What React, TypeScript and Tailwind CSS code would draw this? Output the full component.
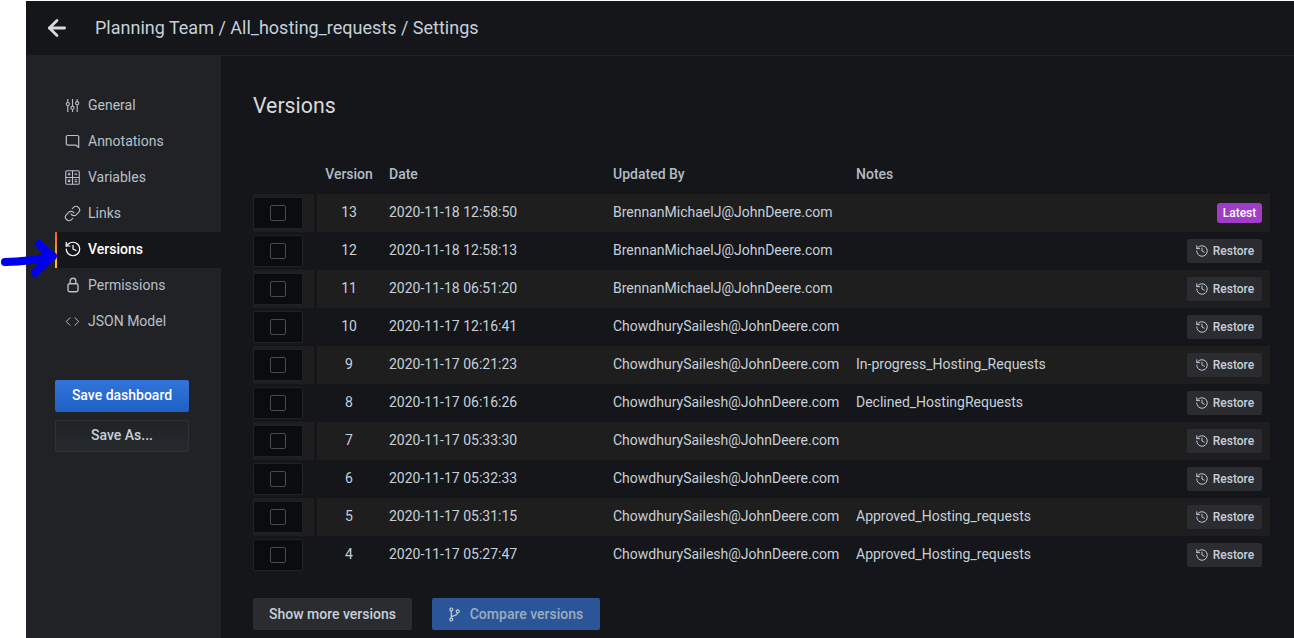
import { ArrowLeft, Link, History, Code } from 'lucide-react';

const NAV = [
  { label: 'General', icon: SlidersIcon, size: 'h-[15px] w-[15px]' },
  { label: 'Annotations', icon: CommentIcon, size: 'h-[15px] w-[15px]' },
  { label: 'Variables', icon: CalcIcon, size: 'h-[15px] w-[15px]' },
  { label: 'Links', icon: Link, size: 'h-[17px] w-[17px]' },
  { label: 'Versions', icon: History, size: 'h-[18px] w-[18px]', active: true },
  { label: 'Permissions', icon: LockIcon, size: 'h-[16px] w-[16px]' },
  { label: 'JSON Model', icon: Code, size: 'h-[15px] w-[15px]' },
];

const VERSIONS = [
  { v: 13, date: '2020-11-18 12:58:50', by: 'BrennanMichaelJ@JohnDeere.com', notes: '', latest: true },
  { v: 12, date: '2020-11-18 12:58:13', by: 'BrennanMichaelJ@JohnDeere.com', notes: '' },
  { v: 11, date: '2020-11-18 06:51:20', by: 'BrennanMichaelJ@JohnDeere.com', notes: '' },
  { v: 10, date: '2020-11-17 12:16:41', by: 'ChowdhurySailesh@JohnDeere.com', notes: '' },
  { v: 9, date: '2020-11-17 06:21:23', by: 'ChowdhurySailesh@JohnDeere.com', notes: 'In-progress_Hosting_Requests' },
  { v: 8, date: '2020-11-17 06:16:26', by: 'ChowdhurySailesh@JohnDeere.com', notes: 'Declined_HostingRequests' },
  { v: 7, date: '2020-11-17 05:33:30', by: 'ChowdhurySailesh@JohnDeere.com', notes: '' },
  { v: 6, date: '2020-11-17 05:32:33', by: 'ChowdhurySailesh@JohnDeere.com', notes: '' },
  { v: 5, date: '2020-11-17 05:31:15', by: 'ChowdhurySailesh@JohnDeere.com', notes: 'Approved_Hosting_requests' },
  { v: 4, date: '2020-11-17 05:27:47', by: 'ChowdhurySailesh@JohnDeere.com', notes: 'Approved_Hosting_requests' },
];

function SlidersIcon({ className }: { className?: string }) {
  return (
    <svg viewBox="0 0 16 16" fill="none" stroke="currentColor" strokeWidth="1.2" className={className}>
      <path d="M3 1v3.7M3 8.3v6.7M8 1v7.7M8 12.3v2.7M13 1v2.7M13 7.3v7.7" />
      <circle cx="3" cy="6.5" r="1.7" />
      <circle cx="8" cy="10.5" r="1.7" />
      <circle cx="13" cy="5.5" r="1.7" />
    </svg>
  );
}

function CommentIcon({ className }: { className?: string }) {
  return (
    <svg viewBox="0 0 16 16" fill="none" stroke="currentColor" strokeWidth="1.3" strokeLinejoin="round" className={className}>
      <path d="M2.8 1.6h10.4a1.4 1.4 0 0 1 1.4 1.4v11.4l-3-2.6H2.8a1.4 1.4 0 0 1-1.4-1.4V3a1.4 1.4 0 0 1 1.4-1.4z" />
    </svg>
  );
}

function CalcIcon({ className }: { className?: string }) {
  return (
    <svg viewBox="0 0 16 16" fill="none" stroke="currentColor" strokeWidth="1.2" className={className}>
      <rect x="0.8" y="0.8" width="14.4" height="14.4" rx="1.2" />
      <path d="M8 0.8v14.4M0.8 8h14.4M3 4.4h2.8M4.4 3v2.8M10.2 4.4h2.8M3.2 10.2l2.4 2.4M5.6 10.2l-2.4 2.4M10.2 10.4h2.8M10.2 12.4h2.8" />
    </svg>
  );
}

function LockIcon({ className }: { className?: string }) {
  return (
    <svg viewBox="0 0 16 16" fill="none" stroke="currentColor" strokeWidth="1.4" className={className}>
      <rect x="3" y="6.7" width="10" height="8" rx="1.6" />
      <path d="M5.2 6.7V4a2.8 2.8 0 0 1 5.6 0v2.7" />
    </svg>
  );
}

function BranchIcon({ className }: { className?: string }) {
  return (
    <svg viewBox="0 0 12 16" fill="none" stroke="currentColor" strokeWidth="1.3" className={className}>
      <circle cx="2.5" cy="2.5" r="1.6" />
      <circle cx="2.5" cy="13.5" r="1.6" />
      <circle cx="9.5" cy="4.5" r="1.6" />
      <path d="M2.5 4.1v7.8M9.5 6.1c0 2.6-3.5 3.4-7 4.2" />
    </svg>
  );
}

function Row({ row, striped }: { row: (typeof VERSIONS)[number]; striped: boolean }) {
  const bg = striped ? 'bg-[#1e1e1f]' : '';
  return (
    <div className="flex h-[38px] w-[1017px]">
      <div className={`flex w-[61px] items-center ${bg}`}>
        <div className="flex h-[32px] w-[50px] items-center justify-center rounded-[2px] border border-[#202226] bg-[#0b0c0e]">
          <div className="h-[16px] w-[16px] rounded-[2px] border border-[#464c54] bg-[#0b0c0e]" />
        </div>
      </div>
      <div className={`ml-[3px] flex flex-1 items-center ${bg}`}>
        <div className="mb-[2px] w-[64px] text-center">{row.v}</div>
        <div className="mb-[2px] ml-[8px] w-[224px]">{row.date}</div>
        <div className="mb-[2px] w-[243px] whitespace-nowrap">{row.by}</div>
        <div className="mb-[2px] flex-1 whitespace-nowrap">{row.notes}</div>
        <div className="mr-[8px] flex">
          {row.latest ? (
            <span className="flex h-[20px] w-[45px] items-center justify-center rounded-[3px] bg-[#a03cc8] text-[12px] font-medium text-white">Latest</span>
          ) : (
            <button className="flex h-[24px] w-[75px] items-center justify-center gap-[4px] rounded-[2px] bg-[#2b2c2f] text-[12px] font-medium text-[#c7d0d9]">
              <History className="h-[14px] w-[14px]" strokeWidth={1.6} />
              Restore
            </button>
          )}
        </div>
      </div>
    </div>
  );
}

export default function App() {
  return (
    <div className="relative flex h-[638px] w-[1294px] overflow-hidden bg-white pl-[26px] pt-px font-['Roboto',sans-serif] text-[14px] text-[#c7d0d9]">
      <div className="flex min-w-0 flex-1 flex-col bg-[#141619]">
        <header className="flex h-[55px] shrink-0 items-center border-b border-[#202226] pl-[18px]">
          <ArrowLeft className="h-[26px] w-[26px] text-[#d8d9da]" strokeWidth={2.6} />
          <h1 className="mb-[2px] ml-[25px] text-[18px] text-[#c7d0d9]">Planning Team / All_hosting_requests / Settings</h1>
        </header>
        <div className="flex min-h-0 flex-1">
          <aside className="w-[195px] shrink-0 bg-[#202226] pl-[29px] pt-[32px]">
            <nav className="flex flex-col">
              {NAV.map(item => (
                <div
                  key={item.label}
                  className={`relative flex h-[36px] items-center gap-[8px] pb-[2px] pl-[10px] ${
                    item.active ? 'bg-[#141619] font-medium text-white' : 'text-[#b7c0c9]'
                  }`}
                >
                  {item.active && <span className="absolute inset-y-0 left-0 w-[2px] bg-gradient-to-b from-[#f05a28] to-[#fbca0a]" />}
                  <span className="flex h-[15px] w-[15px] items-center justify-center">
                    <item.icon className={`shrink-0 ${item.size}`} strokeWidth={1.6} />
                  </span>
                  {item.label}
                </div>
              ))}
            </nav>
            <div className="mt-[40px] flex w-[134px] flex-col gap-[8px]">
              <button className="h-[32px] rounded-[2px] bg-gradient-to-b from-[#3274d9] to-[#1f60c4] pb-[2px] font-medium text-white">Save dashboard</button>
              <button className="h-[32px] rounded-[2px] border border-[#2c3235] bg-gradient-to-b from-[#202226] to-[#262a2d] pb-[2px] font-medium text-[#c7d0d9]">Save As...</button>
            </div>
          </aside>
          <main className="flex-1 pl-[32px] pt-[37px]">
            <h2 className="text-[21.3px] leading-[26px] text-[#d8d9da]">Versions</h2>
            <div className="mt-[43px] flex h-[25px] w-[1017px] items-center font-medium text-[#b3bcc5]">
              <div className="ml-[64px] w-[64px] text-center">Version</div>
              <div className="ml-[8px] w-[224px]">Date</div>
              <div className="w-[243px]">Updated By</div>
              <div>Notes</div>
            </div>
            <div className="mt-[7px] flex flex-col">
              {VERSIONS.map((row, i) => (
                <Row key={row.v} row={row} striped={i % 2 === 0} />
              ))}
            </div>
            <div className="mt-[24px] flex gap-[20px] font-medium">
              <button className="h-[32px] w-[159px] rounded-[2px] bg-[#2b2c2f] text-[#c7d0d9]">Show more versions</button>
              <button className="flex h-[32px] w-[168px] items-center justify-center gap-[10px] rounded-[2px] bg-[#2a5599] text-[#9eacc0]">
                <BranchIcon className="h-[15px] w-[11px] text-[#c7d0d9]" />
                Compare versions
              </button>
            </div>
          </main>
        </div>
      </div>
      {/* hand-drawn annotation arrow on top of the screenshot */}
      <svg className="absolute left-0 top-[235px] h-[45px] w-[60px]" viewBox="0 0 60 45" fill="none" stroke="#0000ee" strokeWidth="8" strokeLinecap="round" strokeLinejoin="round">
        <path d="M5 27c14-.5 30-1.5 47-5" />
        <path d="M39 9c3 3 8 9 14 12-5 5-12 9-18 17" />
        <path d="M46 17l-3 13" />
      </svg>
    </div>
  );
}
